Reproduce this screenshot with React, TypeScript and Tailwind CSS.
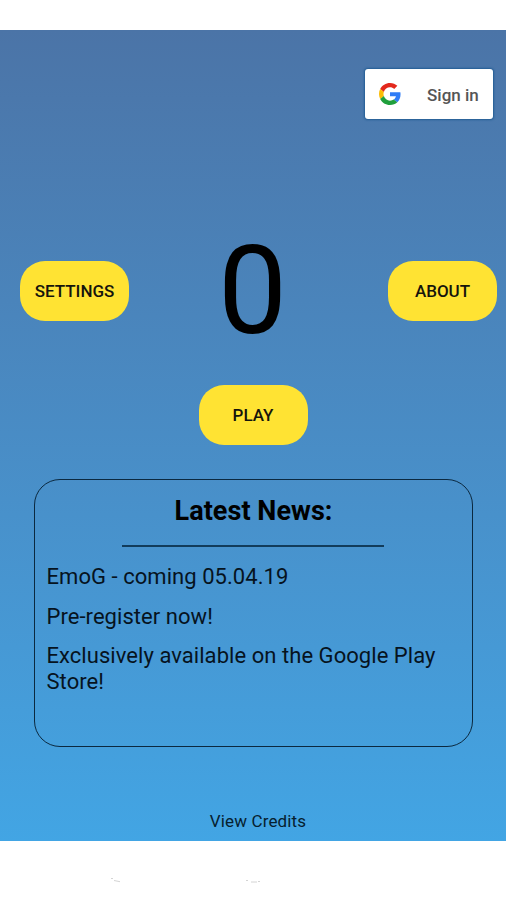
import { useState } from "react";

function GoogleLogo() {
  return (
    <svg viewBox="0 0 48 48" className="w-[22px] h-[22px] shrink-0">
      <path fill="#E3281C" d="M24 9.5c3.54 0 6.71 1.22 9.21 3.6l6.85-6.85C35.9 2.38 30.47 0 24 0 14.62 0 6.51 5.38 2.56 13.22l7.98 6.19C12.43 13.72 17.74 9.5 24 9.5z" />
      <path fill="#2F7CF6" d="M46.98 24.55c0-1.57-.15-3.09-.38-4.55H24v9.02h12.94c-.58 2.96-2.26 5.48-4.78 7.18l7.73 6c4.51-4.18 7.09-10.36 7.09-17.65z" />
      <path fill="#FBBC05" d="M10.53 28.59c-.48-1.45-.76-2.99-.76-4.59s.27-3.14.76-4.59l-7.98-6.19C.92 16.46 0 20.12 0 24c0 3.88.92 7.54 2.56 10.78l7.97-6.19z" />
      <path fill="#1F9F3C" d="M24 48c6.48 0 11.93-2.13 15.89-5.81l-7.73-6c-2.15 1.45-4.92 2.3-8.16 2.3-6.26 0-11.57-4.22-13.47-9.91l-7.98 6.19C6.51 42.62 14.62 48 24 48z" />
    </svg>
  );
}

function MenuButton({ label }: { label: string }) {
  return (
    <button
      type="button"
      className="w-[109px] h-[60px] shrink-0 rounded-[25px] bg-[#ffe333] pt-[2px] text-[17px] font-medium text-[#15140c] whitespace-nowrap"
    >
      {label}
    </button>
  );
}

const news = [
  "EmoG - coming 05.04.19",
  "Pre-register now!",
  "Exclusively available on the Google Play Store!",
];

export default function App() {
  const [score] = useState(0);

  return (
    <div className="w-[506px] h-[900px] overflow-hidden bg-white pt-[30px] font-['Roboto',sans-serif] text-black">
      <main className="flex h-[811px] flex-col bg-linear-to-b from-[#4b74a7] to-[#42a5e4]">
        <div className="flex justify-end pt-[39px] pr-[13px]">
          <button
            type="button"
            className="flex w-[128px] h-[50px] items-center rounded-[3px] bg-white pl-[14px] shadow-[0_0_2px_1px_#235d94]"
          >
            <GoogleLogo />
            <span className="ml-[26px] pt-[3px] text-[17px] font-medium text-[#555] whitespace-nowrap">
              Sign in
            </span>
          </button>
        </div>

        <div className="mt-[112px] flex h-[120px] items-center justify-between pl-[20px] pr-[9px]">
          <MenuButton label="SETTINGS" />
          <div className="text-[123px] leading-[120px] mr-[12px]">{score}</div>
          <MenuButton label="ABOUT" />
        </div>

        <div className="mt-[34px] flex justify-center">
          <MenuButton label="PLAY" />
        </div>

        <section className="mt-[34px] mx-auto w-[439px] h-[268px] rounded-[26px] border-[1.5px] border-[#0b2940] px-[12px]">
          <h2 className="pt-[15px] pl-[1px] text-center text-[27px] leading-[32px] font-bold tracking-[0.05px]">
            Latest News:
          </h2>
          <hr className="mx-auto mt-[18px] w-[262px] border-t-2 border-[#123c5b]" />
          <div className="mt-[17px] flex flex-col gap-[14px] text-[22px] leading-[25.6px] tracking-[0.05px] text-[#06131e]">
            {news.map((item) => (
              <p key={item}>{item}</p>
            ))}
          </div>
        </section>

        <button type="button" className="mx-auto mt-[63px] pl-[10px] text-[17px] leading-[22px] tracking-[0.15px] text-[#06202f]">
          View Credits
        </button>
      </main>

      <svg viewBox="0 0 506 59" className="w-[506px] h-[59px]" stroke="#d4d4d4" fill="none">
        <path d="M111 37.5h2M114 39.5l6 1.2M246 39.5h2M251 41h6M258 40.5h2" />
      </svg>
    </div>
  );
}
